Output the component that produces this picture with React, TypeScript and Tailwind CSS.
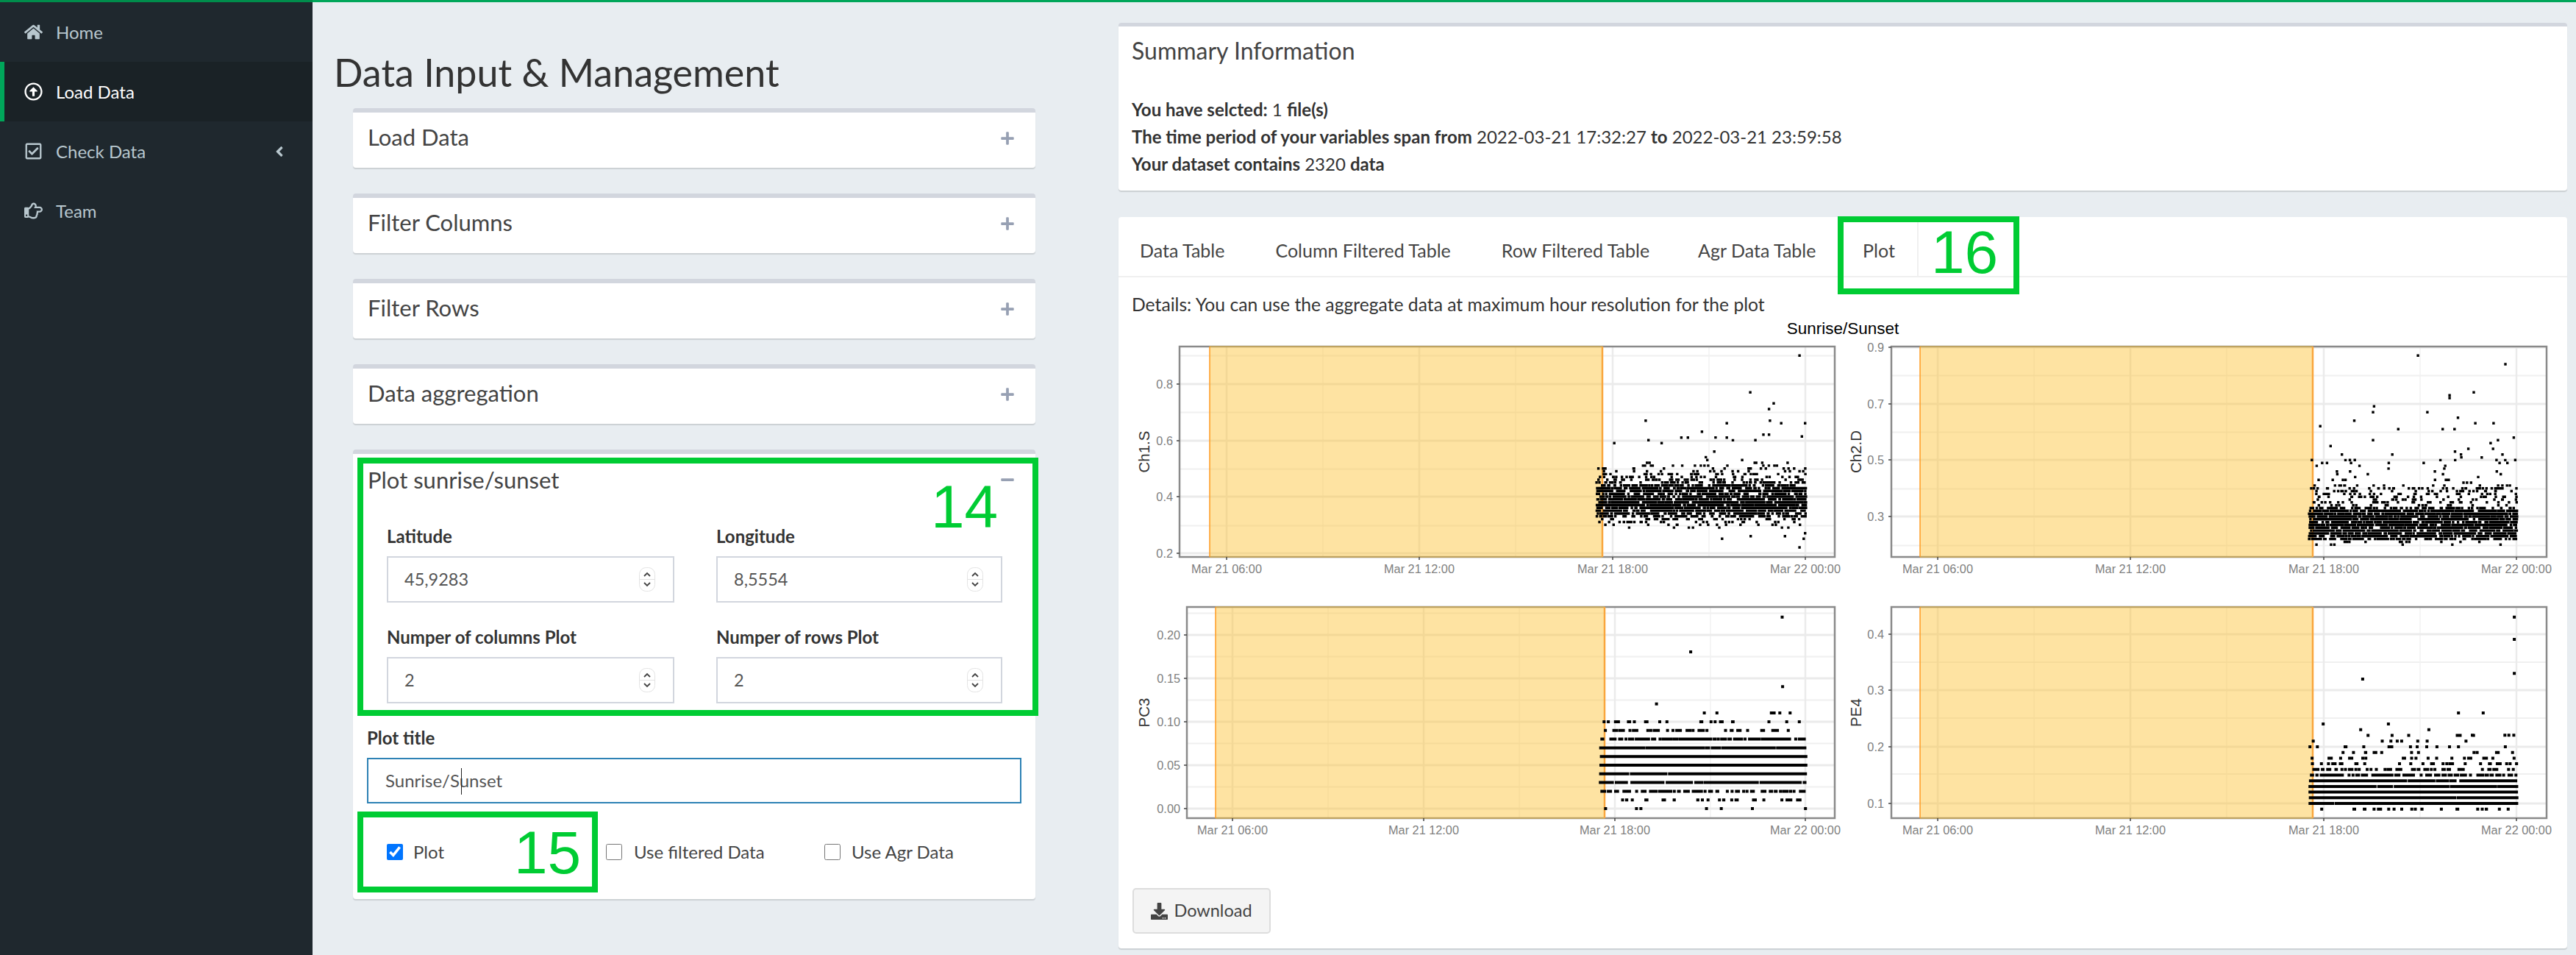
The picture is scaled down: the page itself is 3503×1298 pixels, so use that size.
import {
  FaAngleLeft,
  FaDownload,
  FaHome,
  FaMinus,
  FaPlus,
  FaRegArrowAltCircleUp,
  FaRegCheckSquare,
  FaRegHandPointRight,
} from "react-icons/fa";

// --- plot data ---

type PlotConfig = {
  title: string;
  titleX: number;
  labelX: number;
  x0: number;
  x1: number;
  y0: number;
  y1: number;
  shade: [number, number];
  xTicks: number[];
  yTicks: { label: string; y: number }[];
  points: [number, number][];
  dot: number;
};

const X_LABELS = ["Mar 21 06:00", "Mar 21 12:00", "Mar 21 18:00", "Mar 22 00:00"];

function makeRandom(seed: number) {
  let a = seed;
  return () => {
    a = (a + 0x6d2b79f5) | 0;
    let t = Math.imul(a ^ (a >>> 15), 1 | a);
    t = (t + Math.imul(t ^ (t >>> 7), 61 | t)) ^ t;
    return ((t ^ (t >>> 14)) >>> 0) / 4294967296;
  };
}

function gauss(rand: () => number) {
  return (rand() + rand() + rand() + rand() - 2) * 1.73;
}

function quantize(y: number, base: number, step: number) {
  return base + Math.round((y - base) / step) * step;
}

function ch1Points(): [number, number][] {
  const rand = makeRandom(11);
  const pts: [number, number][] = [];
  for (let i = 0; i < 2320; i++) {
    const x = 2171 + rand() * 285;
    const r = rand();
    let y = 0;
    if (r < 0.76) y = 685 + gauss(rand) * 10.5;
    else if (r < 0.995) y = 668 - rand() * rand() * 44;
    else y = 625 - rand() * 40;
    if (rand() < 0.025) y = 700 + rand() * 18;
    pts.push([x, quantize(y, 675, 3.83)]);
  }
  const extra = [
    [1485, 160], [1380, 310], [1430, 355], [1420, 378], [1157, 425], [1422, 425], [1446, 436],
    [1330, 436], [1497, 436], [1277, 470], [1408, 482], [1420, 482], [1233, 494], [1247, 494],
    [1330, 494], [1490, 490], [1163, 505], [1391, 505], [1191, 517], [1320, 907], [1381, 896],
    [1485, 942], [1494, 907], [1497, 884], [1454, 896],
  ];
  extra.forEach(([zx, zy]) => pts.push([1500 + zx / 1.568, 430 + zy / 3]));
  return pts;
}

function ch2Points(): [number, number][] {
  const rand = makeRandom(23);
  const pts: [number, number][] = [];
  for (let i = 0; i < 2320; i++) {
    const x = 3140 + rand() * 283;
    const r = rand();
    let y = 0;
    if (r < 0.89) y = 691 + rand() * 42;
    else if (r < 0.985) y = 690 - rand() * 30;
    else y = 656 - rand() * 34;
    if (rand() < 0.008) y = 733 + rand() * 8;
    pts.push([x, quantize(y, 702, 3.83)]);
  }
  const extra = [
    [1248, 160], [1425, 195], [1361, 310], [1312, 322], [1312, 333], [1159, 367], [1157, 391],
    [1267, 391], [1329, 413], [1119, 425], [1364, 436], [1401, 436], [1050, 448], [1208, 460],
    [1298, 460], [1322, 460], [1442, 494], [1157, 505], [1410, 505], [1395, 517], [1071, 529],
    [1323, 551], [1350, 540], [1400, 540], [1335, 563], [1094, 563], [1196, 563], [1419, 563],
    [1377, 575], [1033, 586], [1110, 586], [1120, 586], [1445, 586], [1407, 586],
  ];
  extra.forEach(([zx, zy]) => pts.push([2450 + zx / 1.489, 430 + zy / 3]));
  return pts;
}

// rows of discrete values: how many dots fall on each
function rowPoints(
  seed: number,
  xa: number,
  xb: number,
  rows: { y: number; n: number }[],
): [number, number][] {
  const rand = makeRandom(seed);
  const pts: [number, number][] = [];
  rows.forEach((row) => {
    for (let i = 0; i < row.n; i++) pts.push([xa + rand() * (xb - xa), row.y]);
  });
  return pts;
}

function pc3Points(): [number, number][] {
  const counts = [7, 32, 90, 230, 420, 560, 420, 260, 150, 50, 24];
  const rows = counts.map((n, i) => ({ y: 1099 - i * 11.8, n }));
  const pts = rowPoints(37, 2176, 2456, rows);
  [
    [1448, 116], [1253, 258], [1449, 400], [1180, 470], [1282, 507], [1309, 507], [1425, 507],
    [1431, 507], [1443, 507], [1465, 507],
  ].forEach(([zx, zy]) => pts.push([1500 + zx / 1.568, 800 + zy / 3]));
  return pts;
}

function pe4Points(): [number, number][] {
  const counts = [24, 460, 520, 560, 340, 260, 100, 55, 30, 22, 14, 14, 8, 6];
  const rows = counts.map((n, i) => ({ y: 1099.7 - i * 7.7, n }));
  const pts = rowPoints(41, 3141, 3423, rows);
  [
    [1443, 116], [1443, 207], [1443, 346], [1136, 369], [1330, 507], [1380, 507], [1056, 552],
    [1188, 552], [1132, 575], [1270, 575], [1358, 598], [1424, 598], [1432, 598], [1442, 598],
  ].forEach(([zx, zy]) => pts.push([2450 + zx / 1.489, 800 + zy / 3]));
  return pts;
}

const TOP_ROW = { y0: 471, y1: 757 };
const BOTTOM_ROW = { y0: 825, y1: 1112 };

const PLOT_CH1: PlotConfig = {
  title: "Ch1.S",
  titleX: 1556,
  labelX: 1595,
  x0: 1604,
  x1: 2495,
  ...TOP_ROW,
  shade: [1645, 2179],
  xTicks: [1668, 1930, 2193, 2455],
  yTicks: [
    { label: "0.8", y: 522 },
    { label: "0.6", y: 599 },
    { label: "0.4", y: 675 },
    { label: "0.2", y: 752 },
  ],
  points: ch1Points(),
  dot: 3.4,
};

const PLOT_CH2: PlotConfig = {
  title: "Ch2.D",
  titleX: 2524,
  labelX: 2562,
  x0: 2572,
  x1: 3463,
  ...TOP_ROW,
  shade: [2611, 3145],
  xTicks: [2635, 2897, 3160, 3422],
  yTicks: [
    { label: "0.9", y: 472 },
    { label: "0.7", y: 549 },
    { label: "0.5", y: 625 },
    { label: "0.3", y: 702 },
  ],
  points: ch2Points(),
  dot: 3.4,
};

const PLOT_PC3: PlotConfig = {
  title: "PC3",
  titleX: 1556,
  labelX: 1605,
  x0: 1614,
  x1: 2495,
  ...BOTTOM_ROW,
  shade: [1653, 2182],
  xTicks: [1676, 1936, 2196, 2455],
  yTicks: [
    { label: "0.20", y: 863 },
    { label: "0.15", y: 922 },
    { label: "0.10", y: 981 },
    { label: "0.05", y: 1040 },
    { label: "0.00", y: 1099 },
  ],
  points: pc3Points(),
  dot: 4,
};

const PLOT_PE4: PlotConfig = {
  title: "PE4",
  titleX: 2524,
  labelX: 2562,
  x0: 2572,
  x1: 3463,
  ...BOTTOM_ROW,
  shade: [2611, 3145],
  xTicks: [2635, 2897, 3160, 3422],
  yTicks: [
    { label: "0.4", y: 862 },
    { label: "0.3", y: 938 },
    { label: "0.2", y: 1015 },
    { label: "0.1", y: 1092 },
  ],
  points: pe4Points(),
  dot: 4,
};

// --- drawing ---

function Plot(props: { plot: PlotConfig; vx: number; vy: number; vh: number }) {
  const { plot, vx, vy, vh } = props;
  const { x0, x1, y0, y1, shade, xTicks, yTicks, dot } = plot;
  const dy = yTicks[1].y - yTicks[0].y;
  const minorY: number[] = [];
  for (let i = -1; i < yTicks.length; i++) {
    const y = yTicks[0].y + dy * i + dy / 2;
    if (y > y0 && y < y1) minorY.push(y);
  }
  const dx = xTicks[1] - xTicks[0];
  const minorX = [0, 1, 2].map((i) => xTicks[i] + dx / 2);
  const dots = plot.points
    .map(([x, y]) => `M${(x - dot / 2).toFixed(1)} ${(y - dot / 2).toFixed(1)}h${dot}v${dot}h-${dot}z`)
    .join("");

  return (
    <svg viewBox={`${vx} ${vy} 965 ${vh}`} className="w-[965px] block" height={vh}>
      {minorY.map((y) => (
        <line key={y} x1={x0} x2={x1} y1={y} y2={y} stroke="#f0f0f0" strokeWidth={2} />
      ))}
      {minorX.map((x) => (
        <line key={x} x1={x} x2={x} y1={y0} y2={y1} stroke="#f2f2f2" strokeWidth={1.5} />
      ))}
      {yTicks.map((t) => (
        <line key={t.y} x1={x0} x2={x1} y1={t.y} y2={t.y} stroke="#ebebeb" strokeWidth={3} />
      ))}
      {xTicks.map((x) => (
        <line key={x} x1={x} x2={x} y1={y0} y2={y1} stroke="#ebebeb" strokeWidth={2.5} />
      ))}
      <rect x={x0} y={y0} width={x1 - x0} height={y1 - y0} fill="none" stroke="#8a8a8a" strokeWidth={2.5} />
      <rect x={shade[0]} y={y0 - 1} width={shade[1] - shade[0]} height={y1 - y0 + 2} fill="#fcc335" fillOpacity={0.46} />
      <line x1={shade[0]} x2={shade[0]} y1={y0} y2={y1} stroke="#ff9a1f" strokeWidth={1.5} />
      <line x1={shade[1]} x2={shade[1]} y1={y0} y2={y1} stroke="#f9a63d" strokeWidth={2.5} />
      <path d={dots} fill="#000" />
      {yTicks.map((t) => (
        <g key={t.label}>
          <line x1={x0 - 4} x2={x0} y1={t.y} y2={t.y} stroke="#444" strokeWidth={1.5} />
          <text
            x={plot.labelX}
            y={t.y + 6}
            textAnchor="end"
            fontSize={16.3}
            fill="#808080"
            fontFamily="'Liberation Sans', sans-serif"
          >
            {t.label}
          </text>
        </g>
      ))}
      {xTicks.map((x, i) => (
        <g key={x}>
          <line x1={x} x2={x} y1={y1} y2={y1 + 4} stroke="#444" strokeWidth={1.5} />
          <text
            x={x}
            y={y1 + 22}
            textAnchor="middle"
            fontSize={16.3}
            fill="#808080"
            fontFamily="'Liberation Sans', sans-serif"
          >
            {X_LABELS[i]}
          </text>
        </g>
      ))}
      <text
        transform={`translate(${plot.titleX + 7} ${(y0 + y1) / 2}) rotate(-90)`}
        textAnchor="middle"
        fontSize={20.5}
        fill="#333"
        fontFamily="'Liberation Sans', sans-serif"
      >
        {plot.title}
      </text>
    </svg>
  );
}

function Spinner() {
  return (
    <svg width="22" height="33" viewBox="0 0 22 33" className="shrink-0">
      <rect x="0.5" y="0.5" width="21" height="32" rx="9" fill="#fff" stroke="#e3e3e3" />
      <line x1="1" x2="21" y1="16.5" y2="16.5" stroke="#e3e3e3" />
      <path d="M7 12l4-4 4 4" fill="none" stroke="#444" strokeWidth="1.8" />
      <path d="M7 21l4 4 4-4" fill="none" stroke="#444" strokeWidth="1.8" />
    </svg>
  );
}

function NumberField(props: { label: string; value: string }) {
  return (
    <div>
      <div className="h-[30px] leading-[30px] text-[24px] font-bold text-[#333] mb-[12px]">{props.label}</div>
      <div className="h-[63px] border-2 border-[#d2d6de] flex items-center justify-between pl-[22px] pr-[24px] bg-white">
        <span className="text-[23.5px] text-[#555]">{props.value}</span>
        <Spinner />
      </div>
    </div>
  );
}

function CollapsedBox(props: { title: string }) {
  return (
    <div className="h-[81px] bg-white border-t-[6px] border-[#d2d6de] rounded-[4px] shadow-[0_2px_1px_rgba(0,0,0,0.12)] flex items-center justify-between pl-[20px] pr-[28px]">
      <span className="text-[31px] text-[#444] -mt-[8px]">{props.title}</span>
      <FaPlus className="text-[#97a0b3] text-[20px] -mt-[6px]" />
    </div>
  );
}

function Marker(props: { className: string; num: string; numClass: string }) {
  return (
    <div className={"absolute border-[8px] border-[#00cc33] pointer-events-none " + props.className}>
      <span className={"absolute " + props.numClass}>
        <span className="[font-family:Liberation_Sans,Arial,sans-serif] text-[82px] leading-none text-[#00cc33] block">
          {props.num}
        </span>
      </span>
    </div>
  );
}

function NavItem(props: { icon: React.ReactNode; label: string; active?: boolean; arrow?: boolean }) {
  return (
    <div
      className={
        props.active
          ? "h-[81px] flex items-center bg-[#1a2226] border-l-[6px] border-[#00a65a] pl-[27px] text-white"
          : "h-[81px] flex items-center pl-[33px] text-[#b8c7ce]"
      }
    >
      <span className="w-[43px] text-[25px] flex shrink-0">{props.icon}</span>
      <span className="text-[24px]">{props.label}</span>
      {props.arrow && <FaAngleLeft className="ml-auto mr-[34px] text-[22px]" />}
    </div>
  );
}

export default function App() {
  return (
    <div className="w-[3503px] h-[1298px] overflow-hidden flex bg-[#e8edf1] [font-family:Lato,sans-serif] text-[#333]">
      {/* Sidebar */}
      <aside className="w-[425px] shrink-0 h-full bg-[#1f282e] border-t-[3px] border-[#008d4c]">
        <NavItem icon={<FaHome />} label="Home" />
        <NavItem icon={<FaRegArrowAltCircleUp />} label="Load Data" active />
        <NavItem icon={<FaRegCheckSquare />} label="Check Data" arrow />
        <NavItem icon={<FaRegHandPointRight />} label="Team" />
      </aside>

      <main className="flex-1 border-t-[3px] border-[#00a65a] flex">
        {/* Left column */}
        <section className="w-[983px] shrink-0 pl-[29px] pt-[65px]">
          <h1 className="text-[52px] leading-[60px] text-[#333] mb-[19px]">Data Input &amp; Management</h1>
          <div className="ml-[26px] w-[928px] flex flex-col gap-[35px]">
            <CollapsedBox title="Load Data" />
            <CollapsedBox title="Filter Columns" />
            <CollapsedBox title="Filter Rows" />
            <CollapsedBox title="Data aggregation" />
            <div className="relative h-[611px] bg-white border-t-[6px] border-[#d2d6de] rounded-[4px] shadow-[0_2px_1px_rgba(0,0,0,0.12)]">
              <div className="h-[70px] flex items-center justify-between pl-[20px] pr-[28px]">
                <span className="text-[31px] text-[#444]">Plot sunrise/sunset</span>
                <FaMinus className="text-[#97a0b3] text-[20px]" />
              </div>
              <div className="mt-[27px] ml-[46px] grid grid-cols-[391px_389px] gap-x-[57px] gap-y-[32px]">
                <NumberField label="Latitude" value="45,9283" />
                <NumberField label="Longitude" value="8,5554" />
                <NumberField label="Numper of columns Plot" value="2" />
                <NumberField label="Numper of rows Plot" value="2" />
              </div>
              <div className="mt-[32px] mx-[19px]">
                <div className="h-[30px] leading-[30px] text-[24px] font-bold text-[#333] mb-[12px]">Plot title</div>
                <div className="relative h-[62px] border-2 border-[#2e82b5] flex items-center pl-[23px] text-[24px] text-[#555]">
                  Sunrise/Sunset
                  <span className="absolute left-[126px] top-[12px] h-[36px] w-[1px] bg-[#222]" />
                </div>
              </div>
              <div className="mt-[43px] h-[46px] flex items-center text-[24px] text-[#444]">
                <label className="ml-[46px] w-[298px] flex items-center gap-[14px]">
                  <input type="checkbox" defaultChecked className="w-[22px] h-[22px] accent-[#0075ff]" />
                  Plot
                </label>
                <label className="w-[297px] flex items-center gap-[16px]">
                  <input type="checkbox" className="w-[22px] h-[22px]" />
                  Use filtered Data
                </label>
                <label className="flex items-center gap-[15px]">
                  <input type="checkbox" className="w-[22px] h-[22px]" />
                  Use Agr Data
                </label>
              </div>
              <Marker className="left-[6px] top-[5px] w-[926px] h-[351px]" num="14" numClass="left-[772px] top-[18px]" />
              <Marker className="left-[6px] top-[486px] w-[327px] h-[110px]" num="15" numClass="left-[205px] top-[7px]" />
            </div>
          </div>
        </section>

        {/* Right column */}
        <section className="w-[1970px] shrink-0 ml-[113px] pt-[28px]">
          <div className="h-[228px] bg-white border-t-[5px] border-[#d2d6de] rounded-[4px] shadow-[0_2px_1px_rgba(0,0,0,0.12)] pl-[18px]">
            <h3 className="h-[66px] flex items-center text-[32px] text-[#444]">Summary Information</h3>
            <div className="mt-[28px] text-[24px] leading-[37px] text-[#333]">
              <p>
                <b>You have selcted:</b> 1 <b>file(s)</b>
              </p>
              <p>
                <b>The time period of your variables span from</b> 2022-03-21 17:32:27 <b>to</b> 2022-03-21 23:59:58
              </p>
              <p>
                <b>Your dataset contains</b> 2320 <b>data</b>
              </p>
            </div>
          </div>

          <div className="relative mt-[36px] h-[994px] bg-white rounded-[4px] shadow-[0_2px_1px_rgba(0,0,0,0.12)]">
            <div className="h-[82px] border-b-2 border-[#f0f0f0] flex pl-[29px] text-[25px] leading-[30px] text-[#444]">
              <div className="pr-[69px] pt-[30px]">Data Table</div>
              <div className="pr-[69px] pt-[30px]">Column Filtered Table</div>
              <div className="pr-[66px] pt-[30px]">Row Filtered Table</div>
              <div className="pr-[28px] pt-[30px] w-[190px]">Agr Data Table</div>
              <div className="pl-[34px] pr-[30px] pt-[30px] border-r-2 border-[#f0f0f0]">Plot</div>
            </div>
            <p className="mt-[23px] pl-[18px] h-[28px] leading-[28px] text-[24.7px] text-[#333]">
              Details: You can use the aggregate data at maximum hour resolution for the plot
            </p>
            <div className="mt-[5px] h-[28px] flex justify-center items-center [font-family:Liberation_Sans,Arial,sans-serif] text-[22.5px] text-black">
              Sunrise/Sunset
            </div>
            <div className="ml-[19px] grid grid-cols-[965px_965px]">
              <Plot plot={PLOT_CH1} vx={1540} vy={461} vh={349} />
              <Plot plot={PLOT_CH2} vx={2505} vy={461} vh={349} />
              <Plot plot={PLOT_PC3} vx={1540} vy={810} vh={330} />
              <Plot plot={PLOT_PE4} vx={2505} vy={810} vh={330} />
            </div>
            <button className="mt-[67px] ml-[19px] w-[188px] h-[62px] bg-[#f4f4f4] border-2 border-[#ddd] rounded-[5px] flex items-center justify-center gap-[8px] text-[23.5px] text-[#444]">
              <FaDownload className="text-[23px]" />
              Download
            </button>
            <Marker className="left-[978px] -top-[1px] w-[247px] h-[106px]" num="16" numClass="left-[119px] top-0" />
          </div>
        </section>
      </main>
    </div>
  );
}
